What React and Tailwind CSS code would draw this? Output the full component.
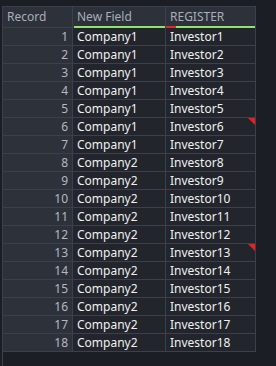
import React from "react";

const rows = Array.from({ length: 18 }, (_, i) => ({
  id: i + 1,
  company: i < 7 ? "Company1" : "Company2",
  investor: `Investor${i + 1}`,
  flagged: i === 5 || i === 12,
}));

export default function App() {
  return (
    <div
      className="w-[276px] h-[366px] bg-[#1b1e24] overflow-hidden pt-[6px] pl-[2px]"
      style={{ fontFamily: '"Noto Sans", "Open Sans", sans-serif' }}
    >
      <div className="h-full border-l border-[#3b404a]">
        <div className="w-[253px] border-t border-[#3b404a] text-[12px] leading-none">
          {/* header */}
          <div className="flex h-[21px] bg-[#2d313a]">
            <div className="w-[70px] shrink-0 flex items-center pl-[4px] text-[#a9aeb8] border-r border-b border-[#3b404a]">
              Record
            </div>
            <div className="w-[93px] shrink-0 flex flex-col border-r border-[#3b404a]">
              <div className="flex-1 flex items-center pl-[4px] text-[#a9aeb8]">New Field</div>
              <div className="h-[2px] bg-[#8fe36b] ml-[1px]" />
            </div>
            <div className="w-[90px] shrink-0 flex flex-col border-r border-[#3b404a]">
              <div className="flex-1 flex items-center pl-[4px] text-[#a9aeb8]">REGISTER</div>
              <div className="h-[2px] flex">
                <div className="w-[10px] bg-[#e5262a]" />
                <div className="flex-1 bg-[#8fe36b]" />
              </div>
            </div>
          </div>
          {/* body */}
          {rows.map((r) => (
            <div key={r.id} className="flex h-[18px] border-b border-[#3b404a]">
              <div className="w-[70px] shrink-0 flex items-center justify-end pr-[4px] bg-[#2d313a] text-[#b4b8c0] border-r border-[#3b404a]">
                {r.id}
              </div>
              <div className="w-[93px] shrink-0 flex items-center pl-[4px] bg-[#22252c] text-[#f0f0f0] border-r border-[#3b404a]">
                {r.company}
              </div>
              <div className="relative w-[90px] shrink-0 flex items-center pl-[4px] bg-[#22252c] text-[#f0f0f0] border-r border-[#3b404a]">
                {r.investor}
                {r.flagged && (
                  <div className="absolute top-0 right-0 w-0 h-0 border-t-[7px] border-t-[#f01c1c] border-l-[7px] border-l-transparent" />
                )}
              </div>
            </div>
          ))}
        </div>
      </div>
    </div>
  );
}
